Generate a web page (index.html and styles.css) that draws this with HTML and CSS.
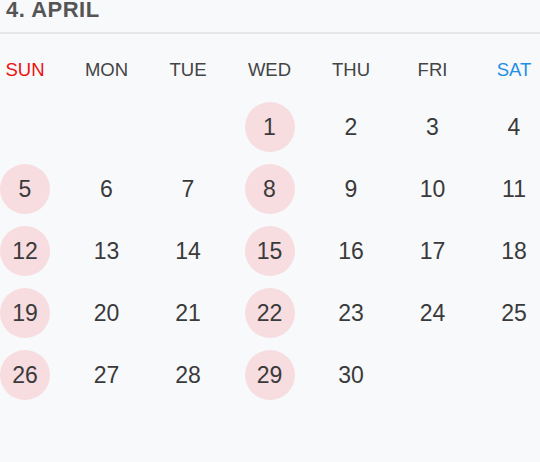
FILE: index.html
```html
<!DOCTYPE html>
<html>
<head>
<meta charset="utf-8">
<link rel="stylesheet" href="styles.css">
</head>
<body>
<div class="cal">
  <h1 class="title">4. APRIL</h1>
  <div class="grid weekdays">
    <div class="wd sun">SUN</div>
    <div class="wd">MON</div>
    <div class="wd">TUE</div>
    <div class="wd">WED</div>
    <div class="wd">THU</div>
    <div class="wd">FRI</div>
    <div class="wd sat">SAT</div>
  </div>
  <div class="grid days">
    <div class="d"></div><div class="d"></div><div class="d"></div>
    <div class="d mark">1</div><div class="d">2</div><div class="d">3</div><div class="d">4</div>
    <div class="d mark">5</div><div class="d">6</div><div class="d">7</div><div class="d mark">8</div><div class="d">9</div><div class="d">10</div><div class="d">11</div>
    <div class="d mark">12</div><div class="d">13</div><div class="d">14</div><div class="d mark">15</div><div class="d">16</div><div class="d">17</div><div class="d">18</div>
    <div class="d mark">19</div><div class="d">20</div><div class="d">21</div><div class="d mark">22</div><div class="d">23</div><div class="d">24</div><div class="d">25</div>
    <div class="d mark">26</div><div class="d">27</div><div class="d">28</div><div class="d mark">29</div><div class="d">30</div>
  </div>
</div>
</body>
</html>
```
FILE: styles.css
```css
html, body {
  margin: 0;
  padding: 0;
  background: #f8f9fb;
}
body {
  font-family: "Liberation Sans", Arial, sans-serif;
  width: 540px;
  height: 462px;
  overflow: hidden;
}
.title {
  margin: 0;
  padding: 0 0 12px 6px;
  font-size: 22px;
  line-height: 20px;
  letter-spacing: 0.5px;
  font-weight: bold;
  color: #555;
  border-bottom: 2px solid #e6e7ea;
}
.grid {
  display: grid;
  grid-template-columns: repeat(7, 50px);
  column-gap: 31.5px;
}
.weekdays {
  margin-top: 26px;
}
.wd {
  font-size: 18.5px;
  line-height: 20px;
  text-align: center;
  color: #444;
  white-space: nowrap;
  display: flex;
  justify-content: center;
}
.wd.sun { color: #ee1111; }
.wd.sat { color: #1e8fe6; }
.days {
  margin-top: 22px;
  row-gap: 12px;
  grid-auto-rows: 50px;
}
.d {
  display: flex;
  align-items: center;
  justify-content: center;
  font-size: 23px;
  color: #3a3a3a;
  border-radius: 50%;
}
.d.mark {
  background: #f7dce0;
}
```
